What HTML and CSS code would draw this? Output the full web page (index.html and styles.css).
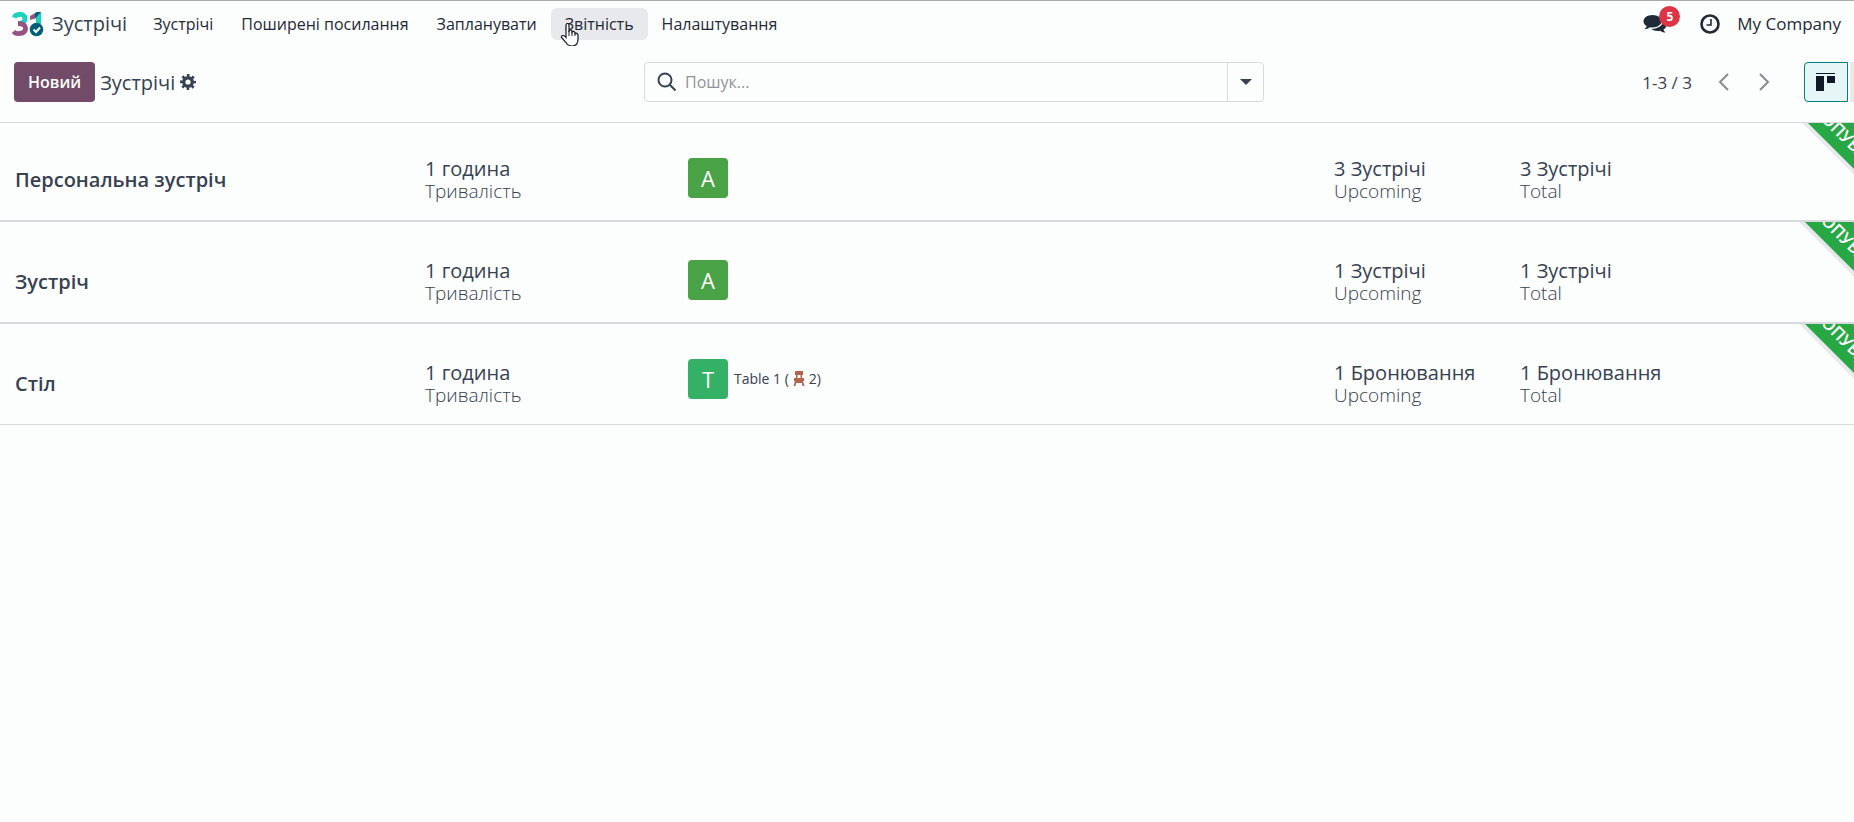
FILE: index.html
```html
<!DOCTYPE html>
<html lang="uk">
<head>
  <meta charset="UTF-8">
  <meta name="viewport" content="width=device-width, initial-scale=1.0">
  <title>Зустрічі</title>
  <link rel="stylesheet" href="styles.css">
</head>
<body>
  <header class="navbar">
    <a class="brand" href="#">
      <svg class="brand-logo" width="32" height="26" viewBox="0 0 32 26" aria-hidden="true">
        <path d="M2 6.500C4 2.500 13 2 13 7.200C13 11 10 12.500 6 12.500" fill="none" stroke="#1ad3bb" stroke-width="4.800"/>
        <path d="M6 12.500C11 12.500 14 14.500 13.500 18C13 23.500 4 23.500 1.500 20.500" fill="none" stroke="#985184" stroke-width="4.800"/>
        <path d="M18 5L25 1V7L18 9Z" fill="#985184"/>
        <path d="M24 1H29V13H24Z" fill="#1ad3bb"/>
        <path d="M23 2.300L25 1H29L24 6.500L23 7Z" fill="#005e7a"/>
        <circle cx="24.500" cy="18.500" r="6.800" fill="#005e7a"/>
        <path d="M21.500 18.500L24 21L28 16.500" fill="none" stroke="#fff" stroke-width="2"/>
      </svg>
      <span>Зустрічі</span>
    </a>
    <nav class="menu">
      <a href="#">Зустрічі</a>
      <a href="#">Поширені посилання</a>
      <a href="#">Запланувати</a>
      <a class="active" href="#">Звітність
        <svg class="pointer" width="20" height="26" viewBox="0 0 20 26" aria-hidden="true">
          <path d="M6 15V3.500Q6 1.500 7.500 1.500T9 3.500V10V8.500Q10.500 7 12 9V10Q13.500 8.500 15 10.500V11.500Q17 10.500 18 13V17Q18 24 12 24Q8 24 6 20.500L1.500 15.500Q1 13.500 3 13.500Q4.500 13.500 6 15.500Z" fill="#fff" stroke="#111827" stroke-width="1.200"/>
          <path d="M9 9V14M12 9.500V14M15 11V14" stroke="#111827" stroke-width="1"/>
        </svg>
      </a>
      <a href="#">Налаштування</a>
    </nav>
    <div class="systray">
      <button class="icon-btn messages" aria-label="Повідомлення">
        <svg width="24" height="20" viewBox="0 0 24 20" fill="#1f2937" aria-hidden="true">
          <path d="M9.500 1C14.500 1 18.500 3.800 18.500 7.200S14.500 13.400 9.500 13.400C8.600 13.400 7.800 13.300 7 13.200C5.300 14.500 3.500 15 1.500 15C2.800 14.200 3.500 13.200 3.700 12.100C1.800 11 .5 9.200 .5 7.200C.5 3.800 4.500 1 9.500 1Z"/>
          <path d="M20 6C22 7.200 23.500 9 23.500 11C23.500 12.900 22.300 14.500 20.500 15.600C20.700 16.700 21.500 17.700 22.500 18.500C20.500 18.500 18.700 17.900 17 16.700C13.700 17.400 10.500 16.700 8.500 15C15 15 20.500 11.500 20 6Z"/>
        </svg>
        <span class="badge">5</span>
      </button>
      <button class="icon-btn" aria-label="Дії">
        <svg width="20" height="20" viewBox="0 0 20 20" fill="none" stroke="#1f2937" aria-hidden="true">
          <circle cx="10" cy="10" r="8.500" stroke-width="2.600"/>
          <path d="M11 5V11H6.500" stroke-width="1.600"/>
        </svg>
      </button>
      <a class="company" href="#">My Company</a>
    </div>
  </header>

  <section class="control-panel">
    <div class="breadcrumb">
      <button class="btn-primary">Новий</button>
      <h1>Зустрічі</h1>
      <button class="icon-btn" aria-label="Налаштування">
        <svg width="16" height="16" viewBox="0 0 16 16" aria-hidden="true">
          <circle cx="8" cy="8" r="4.300" fill="none" stroke="#374151" stroke-width="3.400"/>
          <circle cx="8" cy="8" r="6.700" fill="none" stroke="#374151" stroke-width="2.600" stroke-dasharray="2.630 2.630" stroke-dashoffset="1.300"/>
        </svg>
      </button>
    </div>
    <div class="search">
      <svg width="20" height="20" viewBox="0 0 20 20" fill="none" stroke="#374151" stroke-width="2" aria-hidden="true">
        <circle cx="8" cy="8" r="6.500"/>
        <path d="M12.500 12.500L18.500 18.500"/>
      </svg>
      <input type="text" placeholder="Пошук..." aria-label="Пошук">
      <button class="search-toggle" aria-label="Фільтри">
        <svg width="12" height="6" viewBox="0 0 12 6" aria-hidden="true"><path d="M0 0H12L6 6Z" fill="#374151"/></svg>
      </button>
    </div>
    <div class="panel-right">
      <span class="pager">1-3 / 3</span>
      <button class="icon-btn" aria-label="Назад">
        <svg width="12" height="18" viewBox="0 0 12 18" fill="none" stroke="#868a91" stroke-width="2" aria-hidden="true"><path d="M10 1L2 9L10 17"/></svg>
      </button>
      <button class="icon-btn" aria-label="Далі">
        <svg width="12" height="18" viewBox="0 0 12 18" fill="none" stroke="#868a91" stroke-width="2" aria-hidden="true"><path d="M2 1L10 9L2 17"/></svg>
      </button>
      <div class="views">
        <button class="view active" aria-label="Канбан">
          <svg width="20" height="18" viewBox="0 0 20 18" fill="#111827" aria-hidden="true"><path d="M0 0H19V1H0ZM0 3H8V18H0ZM11 3H19V10H11Z"/></svg>
        </button>
        <button class="view" aria-label="Календар"></button>
      </div>
    </div>
  </section>

  <main class="records">
    <article class="record">
      <h2>Персональна зустріч</h2>
      <div class="stat"><span>1 година</span><small>Тривалість</small></div>
      <div class="resource"><span class="avatar">A</span></div>
      <div class="stat"><span>3 Зустрічі</span><small>Upcoming</small></div>
      <div class="stat"><span>3 Зустрічі</span><small>Total</small></div>
      <div class="ribbon"><span>ОПУБЛІКОВАНО</span></div>
    </article>
    <article class="record">
      <h2>Зустріч</h2>
      <div class="stat"><span>1 година</span><small>Тривалість</small></div>
      <div class="resource"><span class="avatar">A</span></div>
      <div class="stat"><span>1 Зустрічі</span><small>Upcoming</small></div>
      <div class="stat"><span>1 Зустрічі</span><small>Total</small></div>
      <div class="ribbon"><span>ОПУБЛІКОВАНО</span></div>
    </article>
    <article class="record">
      <h2>Стіл</h2>
      <div class="stat"><span>1 година</span><small>Тривалість</small></div>
      <div class="resource table">
        <span class="avatar teal">T</span>
        <span class="table-name">Table 1 (
          <svg width="12" height="15" viewBox="0 0 12 15" fill="#b1654c" aria-hidden="true"><path d="M2 0H10V4H9V7H11V10H10L11.500 15H9.500L8.800 12H3.200L2.500 15H.5L2 10H1V7H3V4H2ZM4.500 4V7H7.500V4Z"/></svg>
          2)</span>
      </div>
      <div class="stat"><span>1 Бронювання</span><small>Upcoming</small></div>
      <div class="stat"><span>1 Бронювання</span><small>Total</small></div>
      <div class="ribbon"><span>ОПУБЛІКОВАНО</span></div>
    </article>
  </main>
</body>
</html>
```

FILE: styles.css
```css
* {
  box-sizing: border-box;
}

body {
  margin: 0;
  border-top: 1px solid #a9a9a9;
  background-color: #fcfefd;
  color: #374151;
  font-family: "Open Sans", "Noto Sans", sans-serif;
  font-size: 17px;
  overflow-x: hidden;
}

a {
  color: inherit;
  text-decoration: none;
}

button {
  padding: 0;
  border: none;
  background: none;
  color: inherit;
  font: inherit;
  cursor: pointer;
}

svg {
  display: block;
}

/* top bar */
.navbar {
  display: flex;
  align-items: center;
  height: 45px;
  padding: 0 13px 0 12px;
  color: #1f2937;
}

.brand {
  display: flex;
  align-items: center;
  gap: 8px;
  margin-right: 12px;
  color: #374151;
  font-size: 20px;
}

.menu {
  display: flex;
  font-size: 16px;
}

.menu a {
  position: relative;
  padding: 0 14px;
  border-radius: 6px;
  line-height: 32px;
}

.menu .active {
  background-color: #e7e9ed;
}

.pointer {
  position: absolute;
  top: 14px;
  left: 9px;
}

.systray {
  display: flex;
  align-items: center;
  gap: 17px;
  margin-left: auto;
}

.messages {
  position: relative;
  margin-right: 16px;
}

.badge {
  position: absolute;
  top: -8px;
  left: 16px;
  width: 21px;
  height: 21px;
  border-radius: 50%;
  background-color: #dc3545;
  color: #fff;
  font-size: 12px;
  font-weight: 700;
  line-height: 21px;
}

/* control panel */
.control-panel {
  position: relative;
  z-index: 1;
  display: grid;
  grid-template-columns: 61fr 620px 57fr;
  gap: 20px;
  height: 77px;
  padding: 16px 0 0 14px;
  border-bottom: 1px solid #d8dadd;
  background-color: #fcfefd;
}

.breadcrumb,
.panel-right {
  display: flex;
  align-items: center;
  height: 40px;
}

.breadcrumb {
  gap: 5px;
}

.breadcrumb h1 {
  margin: 0;
  font-size: 20px;
  font-weight: 400;
}

.btn-primary {
  height: 40px;
  padding: 0 14px;
  border-radius: 4px;
  background-color: #714b67;
  color: #fff;
  font-size: 16px;
  font-weight: 600;
}

.search {
  display: flex;
  align-items: center;
  height: 40px;
  padding-left: 12px;
  border: 1px solid #d8dadd;
  border-radius: 4px;
}

.search input {
  flex: 1;
  padding: 0 8px;
  border: none;
  outline: none;
  background: none;
  color: inherit;
  font: inherit;
  font-size: 16px;
}

.search input::placeholder {
  color: #8f9299;
}

.search-toggle {
  display: flex;
  align-items: center;
  justify-content: center;
  width: 36px;
  height: 38px;
  border-left: 1px solid #d8dadd;
}

.panel-right {
  justify-content: flex-end;
  gap: 28px;
}

.pager {
  margin-right: -2px;
}

.views {
  display: flex;
  gap: 2px;
  margin-left: 6px;
}

.view {
  width: 4px;
  height: 40px;
  background-color: #e7e9ed;
}

.view.active {
  display: flex;
  align-items: center;
  justify-content: center;
  width: 44px;
  border: 1px solid #017e84;
  border-radius: 4px 0 0 4px;
  background-color: #e6f5f6;
}

/* records slide under the control panel */
.records {
  margin-top: -4px;
}

.record {
  position: relative;
  display: grid;
  grid-template-columns: 410px 263px 1fr 186px 334px;
  height: 102px;
  padding: 0 0 0 15px;
  border: 1px solid #d8dadd;
  border-width: 1px 0;
  overflow: hidden;
  font-size: 20px;
}

.record h2 {
  margin: 0;
  padding-top: 46px;
  font-size: 20px;
  font-weight: 600;
  line-height: 28px;
}

.stat {
  display: flex;
  flex-direction: column;
  padding-top: 37px;
  line-height: 23px;
}

.stat small {
  font-size: 19px;
  font-weight: 300;
}

.resource {
  display: flex;
  gap: 6px;
  padding-top: 38px;
}

.resource.table {
  padding-top: 35px;
}

.avatar {
  width: 40px;
  height: 40px;
  border-radius: 4px;
  background-color: #49a245;
  color: #fff;
  font-size: 22px;
  line-height: 40px;
  text-align: center;
}

.avatar.teal {
  background-color: #34b166;
}

.table-name {
  display: flex;
  align-items: center;
  gap: 4px;
  height: 38px;
  font-size: 14px;
}

.ribbon {
  position: absolute;
  top: 0;
  right: -62px;
  width: 116px;
  height: 116px;
  overflow: hidden;
}

.ribbon span {
  position: absolute;
  top: 27px;
  left: -22px;
  width: 190px;
  box-shadow: 0 0 0 4px #e7e9ed;
  background-color: #28a745;
  color: #fff;
  font-size: 17px;
  font-weight: 600;
  line-height: 34px;
  text-align: center;
  transform: rotate(45deg);
}
```
